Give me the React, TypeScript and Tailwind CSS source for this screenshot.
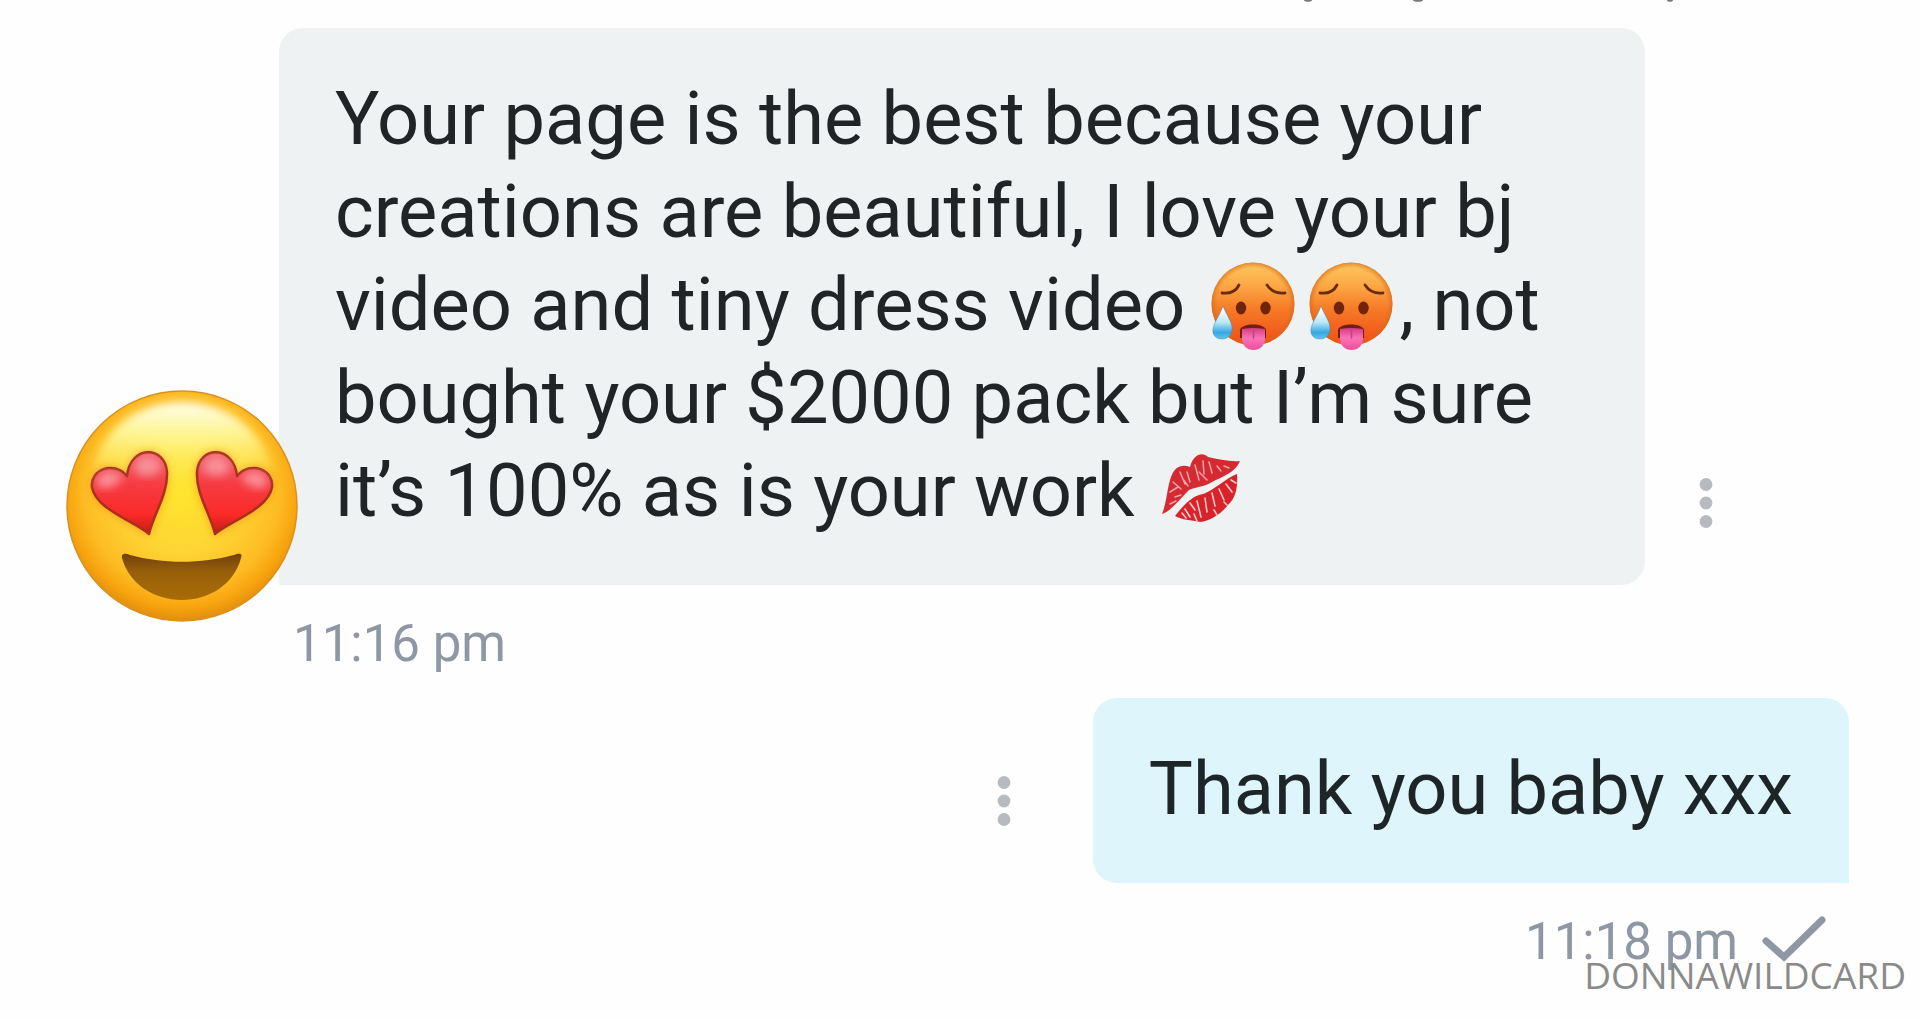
import React from 'react';

function MoreButton({ label }: { label: string }) {
  return (
    <button type="button" aria-label={label} className="shrink-0">
      <svg width="14" height="52" viewBox="0 0 14 52" fill="#b7bbc0">
        <circle cx="7" cy="7.5" r="6.4" />
        <circle cx="7" cy="26" r="6.4" />
        <circle cx="7" cy="44.5" r="6.4" />
      </svg>
    </button>
  );
}

function HeartEyes() {
  return (
    <svg viewBox="0 0 232 232" className="h-full w-full" role="img" aria-label="Heart eyes">
      <defs>
        <radialGradient id="face" cx="0.5" cy="0.44" r="0.57">
          <stop offset="0" stopColor="#ffe52c" />
          <stop offset="0.45" stopColor="#fed534" />
          <stop offset="0.75" stopColor="#fdbb22" />
          <stop offset="0.88" stopColor="#f8a40e" />
          <stop offset="1" stopColor="#dc8a10" />
        </radialGradient>
        <linearGradient id="shine" x1="0" y1="0" x2="0" y2="1">
          <stop offset="0" stopColor="#fffff0" />
          <stop offset="0.35" stopColor="#fffa9c" stopOpacity="0.85" />
          <stop offset="1" stopColor="#ffe92e" stopOpacity="0" />
        </linearGradient>
        <linearGradient id="heart" x1="0" y1="0" x2="0" y2="1">
          <stop offset="0" stopColor="#f06672" />
          <stop offset="0.4" stopColor="#f63b42" />
          <stop offset="0.75" stopColor="#fc2b28" />
          <stop offset="1" stopColor="#c91b14" />
        </linearGradient>
        <linearGradient id="mouth" x1="0" y1="0" x2="0" y2="1">
          <stop offset="0" stopColor="#73400c" />
          <stop offset="0.4" stopColor="#99600a" />
          <stop offset="1" stopColor="#a86c06" />
        </linearGradient>
        <filter id="soft" x="-20%" y="-20%" width="140%" height="140%">
          <feGaussianBlur stdDeviation="4" />
        </filter>
      </defs>
      <circle cx="116" cy="116" r="115" fill="url(#face)" stroke="#d9921f" strokeWidth="1.5" />
      <path d="M116 12C166 12 202 46 207 88C190 118 42 118 25 88C30 46 66 12 116 12Z" fill="url(#shine)" filter="url(#soft)" />
      <g id="eye">
        <path d="M83 147C70 135 28 121 25 96C23 77 46 69 62 86C62 53 99 54 102 81C104 104 88 127 83 147Z" fill="#f08a1d" opacity="0.7" filter="url(#soft)" />
        <path d="M83 144C70 132 29 119 26 97C24 80 47 70 61 86C64 55 99 55 101 82C102 104 88 123 83 144Z" fill="url(#heart)" stroke="#a9301a" strokeWidth="2.5" strokeLinejoin="round" />
        <path d="M30 94C31 81 47 77 57 88C50 96 38 104 30 94Z" fill="#ffd5dc" opacity="0.5" filter="url(#soft)" />
        <path d="M68 78C72 63 90 63 96 78C89 88 74 90 68 78Z" fill="#ffd5dc" opacity="0.45" filter="url(#soft)" />
      </g>
      <use href="#eye" transform="matrix(-1 0 0 1 232 0)" />
      <path d="M56 168C55 163 60 163 64 165C97 174 135 174 168 165C173 163 177 163 175 168C168 195 142 210 116 210C88 210 63 194 56 168Z" fill="url(#mouth)" />
    </svg>
  );
}

function HotFace() {
  return (
    <svg viewBox="0 0 84 88" className="ml-[14px] inline-block h-[88px] w-[84px] align-[-20px] first:ml-0" role="img" aria-label="Hot face">
      <defs>
        <linearGradient id="hot" x1="0" y1="0" x2="0" y2="1">
          <stop offset="0" stopColor="#fdc75f" />
          <stop offset="0.25" stopColor="#fcac48" />
          <stop offset="0.55" stopColor="#f67c27" />
          <stop offset="1" stopColor="#f04b16" />
        </linearGradient>
        <radialGradient id="rim" cx="0.5" cy="0.5" r="0.5">
          <stop offset="0.86" stopColor="#df7318" stopOpacity="0" />
          <stop offset="1" stopColor="#d2651c" stopOpacity="0.65" />
        </radialGradient>
        <linearGradient id="sweat" x1="0" y1="0" x2="0" y2="1">
          <stop offset="0.1" stopColor="#ffffff" />
          <stop offset="0.5" stopColor="#b9e7f6" />
          <stop offset="0.8" stopColor="#35a8e3" />
          <stop offset="1" stopColor="#63c4ed" />
        </linearGradient>
        <linearGradient id="tongue" x1="0" y1="0" x2="0" y2="1">
          <stop offset="0" stopColor="#d33b85" />
          <stop offset="0.45" stopColor="#fb73b5" />
          <stop offset="1" stopColor="#ee4e9c" />
        </linearGradient>
      </defs>
      <circle cx="42" cy="42" r="41.5" fill="url(#hot)" />
      <circle cx="42" cy="42" r="41.5" fill="url(#rim)" />
      <g fill="none" stroke="#6b2b0c" strokeWidth="2.8" strokeLinecap="round">
        <path d="M11 31C19 32 25 29 28 23" />
        <path d="M56 23C60 29 66 32 74 31" />
      </g>
      <g fill="#6f240b">
        <ellipse cx="30" cy="46" rx="5.2" ry="6.5" />
        <ellipse cx="54.5" cy="46" rx="5.2" ry="6.5" />
      </g>
      <path d="M29 70C26 60 58 60 55 70V76H29Z" fill="#701f10" />
      <path d="M31 67Q42 65 54 67V76C54 84 49 88 42.5 88C36 88 31 84 31 76Z" fill="url(#tongue)" />
      <path d="M42.5 68V76" stroke="#c63e83" strokeWidth="1.5" strokeLinecap="round" />
      <path d="M12 44C15 53 22 60 21 68C20 74 16 77 11 77C5 77 1 73 2 67C3 60 9 53 12 44Z" fill="url(#sweat)" stroke="#2f8fbb" strokeOpacity="0.5" />
    </svg>
  );
}

function KissMark() {
  return (
    <svg viewBox="0 0 80 72" className="ml-[8px] inline-block h-[72px] w-[80px] align-[-8px]" role="img" aria-label="Kiss mark">
      <path d="M1 62C6 50 6 36 10 25C14 14 21 12 29 15C32 3 41 -1 47 5C57 7 69 10 79 9C75 20 61 25 51 30C43 35 34 35 28 38C18 48 10 59 1 62Z" fill="#d42b32" />
      <path d="M14 64C22 54 29 46 38 43C51 41 64 26 76 22C77 34 75 46 67 53C60 62 49 69 39 70C30 68 21 68 14 64Z" fill="#d8232a" />
      <g fill="none" stroke="#f0a3a8" strokeWidth="1.5" strokeLinecap="round">
        <path d="M9 40L17 35M12 30L20 37M19 20L24 32M26 20L29 30M34 13L38 28M42 9L43 22M48 10L51 21M56 14L60 19M38 20L46 28M14 45L20 43M22 27L27 34M63 14L68 16M9 52L15 49" />
      </g>
      <g fill="none" stroke="#f3c9cc" strokeWidth="1.6" strokeLinecap="round">
        <path d="M24 57L29 65M29 51L34 58M36 49L40 65M44 46L46 60M51 41L54 54M58 37L63 48M65 32L71 40M70 28L75 31M33 62L36 69M53 58L56 63M63 50L66 53M21 61L25 66" />
      </g>
    </svg>
  );
}

export default function App() {
  return (
    <main className="min-h-screen overflow-hidden bg-[#fefefe] font-['Roboto','Liberation_Sans',sans-serif]">
      {/* tails of the message above */}
      <svg viewBox="0 0 1920 28" className="block h-[28px] w-full" fill="#77797c" aria-hidden="true">
        <ellipse cx="1308" cy="0" rx="4" ry="1.8" />
        <ellipse cx="1418" cy="0" rx="5" ry="1.8" />
        <ellipse cx="1670" cy="0" rx="3" ry="1.8" />
      </svg>

      <section className="mb-[22px]">
        <div className="flex items-end pl-[66px]">
          <div className="z-10 -mr-[19px] -mb-[37px] h-[232px] w-[232px] shrink-0">
            <HeartEyes />
          </div>
          <p className="w-full max-w-[1366px] rounded-3xl rounded-bl-none bg-[#eef2f3] px-[56px] pt-[44px] pb-[48px] text-[74px] leading-[93px] font-[450] text-[#202427]">
            Your page is the best because your
            <br />
            creations are beautiful, I love your bj
            <br />
            video and tiny dress video{' '}
            <span className="mr-[7px] ml-[7px] inline-block h-[93px] align-bottom leading-[93px]">
              <HotFace />
              <HotFace />
            </span>
            , not
            <br />
            bought your $2000 pack but I’m sure
            <br />
            it’s 100% as is your work <KissMark />
          </p>
          <div className="mb-[56px] ml-[54px] flex">
            <MoreButton label="Options for received message" />
          </div>
        </div>
        <time className="mt-[27px] block pl-[293px] text-[51px] leading-[64px] text-[#8e97a3]">11:16 pm</time>
      </section>

      <section>
        <div className="flex items-center justify-end pr-[71px]">
          <div className="mt-[20px] mr-[82px] flex">
            <MoreButton label="Options for sent message" />
          </div>
          <p className="rounded-3xl rounded-br-none bg-[#def5fc] px-[56px] pt-[44px] pb-[48px] text-[74px] leading-[93px] font-[450] text-[#1e2529]">
            Thank you baby xxx
          </p>
        </div>
        <div className="mt-[27px] flex items-start justify-end gap-[24px] pr-[94px] text-[#8e97a3]">
          <time className="text-[51px] leading-[64px]">11:18 pm</time>
          <svg className="mt-[6px]" width="64" height="46" viewBox="0 0 64 46" fill="none" stroke="currentColor" strokeWidth="7" role="img" aria-label="Sent">
            <path d="M4 25L22 41L60 4" strokeLinecap="round" strokeLinejoin="miter" />
          </svg>
        </div>
      </section>

      <div className="relative -mt-[23px] pr-[14px] text-right font-['Open_Sans','Noto_Sans',sans-serif] text-[37px] leading-[48px] text-[#8a8a8a]">
        DONNAWILDCARD
      </div>
    </main>
  );
}
